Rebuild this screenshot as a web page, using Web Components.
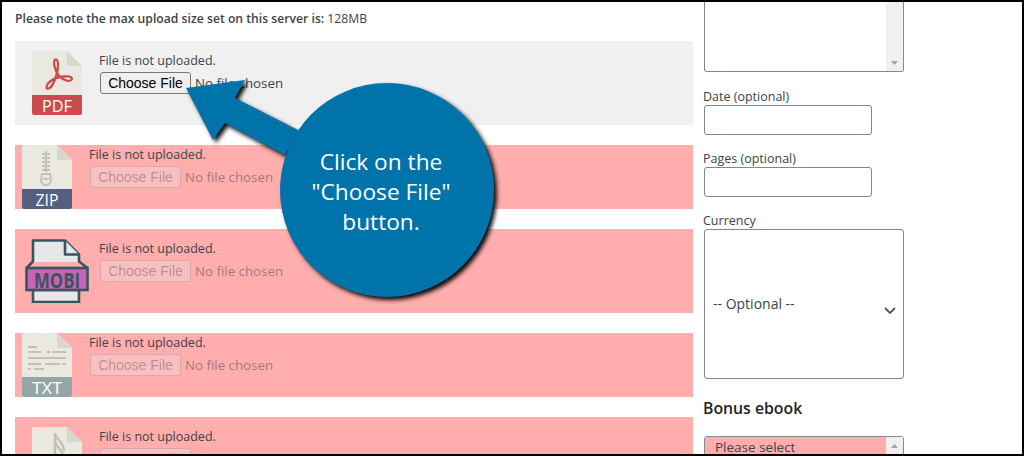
<!DOCTYPE html>
<html>
<head>
<meta charset="utf-8">
<title>Upload</title>
<style>
    html, body { margin: 0; padding: 0; background: #000; }
    body { font-family: "Open Sans", "Liberation Sans", sans-serif; font-size: 12.5px; color: #3c434a; }
</style>
</head>
<body>
<upload-frame>
    <upload-note>Please note the max upload size set on this server is: <span style="font-weight:400">128MB</span></upload-note>
    <upload-row type="pdf" state="active" padded>File is not uploaded.</upload-row>
    <upload-row type="zip">File is not uploaded.</upload-row>
    <upload-row type="mobi" padded>File is not uploaded.</upload-row>
    <upload-row type="txt">File is not uploaded.</upload-row>
    <upload-row type="audio" padded>File is not uploaded.</upload-row>

    <list-box slot="side" class="first" arrow="down" height="70"></list-box>
    <form-field slot="side" class="first" label="Date (optional)"></form-field>
    <form-field slot="side" label="Pages (optional)"></form-field>
    <form-field slot="side" label="Currency" kind="select">-- Optional --</form-field>
    <side-heading slot="side">Bonus ebook</side-heading>
    <list-box slot="side" arrow="up" height="40" option="Please select"></list-box>

    <call-out slot="overlay">Click on the<br>"Choose File"<br>button.</call-out>
</upload-frame>

<script>
    // Bingkai luar dengan dua kolom
    class UploadFrame extends HTMLElement {
        constructor() {
            super();
            this.attachShadow({ mode: 'open' });
            this.shadowRoot.innerHTML = `
                <style>
                    :host {
                        display: grid;
                        grid-template-columns: 678px 1fr;
                        column-gap: 10px;
                        box-sizing: border-box;
                        width: 1024px;
                        height: 456px;
                        padding: 0 0 0 13px;
                        border: 2px solid #000;
                        background: #fff;
                        overflow: hidden;
                        position: relative;
                    }
                    .side { display: flex; flex-direction: column; align-items: flex-start; }
                </style>
                <div class="main"><slot></slot></div>
                <div class="side"><slot name="side"></slot></div>
                <slot name="overlay"></slot>
            `;
        }
    }

    class UploadNote extends HTMLElement {
        constructor() {
            super();
            this.attachShadow({ mode: 'open' });
            this.shadowRoot.innerHTML = `
                <style>
                    :host {
                        display: block;
                        height: 20px;
                        line-height: 20px;
                        padding-top: 7px;
                        margin-bottom: 12px;
                        font-weight: 600;
                        font-size: 12.2px;
                        white-space: nowrap;
                    }
                </style>
                <slot></slot>
            `;
        }
    }

    // Ikon berkas, digambar sesuai jenisnya
    const PAPER = 'M9 0H42L57 15V62a2 2 0 0 1-2 2H9a2 2 0 0 1-2-2V2a2 2 0 0 1 2-2z';
    const FOLD = '<path d="M42 0L57 15H42z" fill="#d9d7ca"/>';
    const band = (color, label, width) => `
        <path d="M7 44H57V62a2 2 0 0 1-2 2H9a2 2 0 0 1-2-2z" fill="${color}"/>
        <text x="32" y="60.500" text-anchor="middle" fill="#fff" font-family="Open Sans, sans-serif" font-size="16.500" textLength="${width}" lengthAdjust="spacingAndGlyphs">${label}</text>`;

    const ICONS = {
        pdf: `<path d="${PAPER}" fill="#e9e9e0"/>${FOLD}
            <path d="M31 8.500c-2 0-2.600 3-1.200 8 1.900 6.400 6 11.500 12 13.100 3 .7 5.200-.3 5.100-2.100-.2-1.800-3.300-2.500-8.200-2-6 .6-12 3-15.200 6.600-2.200 2.500-2.600 5-1 5.500 2 .5 5-3 7-8.100 2-5 3.500-10 3.500-15.600 0-3.200-.8-5.400-2-5.400z" fill="none" stroke="#cc4b4c" stroke-width="2.300"/>
            ${band('#cc4b4c', 'PDF', 30)}`,
        zip: `<path d="${PAPER}" fill="#e9e9e0"/>${FOLD}
            <path d="M31 6V27" stroke="#c8bdb8" stroke-width="2"/>
            <path d="M27 9H35M27 13H35M27 17H35M27 21H35M27 25H35" stroke="#c8bdb8" stroke-width="1.800"/>
            <path d="M27 29H35L36 35a5 5 0 0 1-10 0z" fill="none" stroke="#c8bdb8" stroke-width="2"/>
            <path d="M28 34H34" stroke="#c8bdb8" stroke-width="2"/>
            ${band('#556080', 'ZIP', 23)}`,
        txt: `<path d="${PAPER}" fill="#e9e9e0"/>${FOLD}
            <path d="M13 14H22M13 19H26M32 19H35M37 19H51M13 25H51M13 31H26M30 31H45M47 31H51M13 36H16M19 36H29" stroke="#c8bdb8" stroke-width="1.800"/>
            ${band('#95a5a5', 'TXT', 30)}`,
        audio: `<path d="${PAPER}" fill="#e9e9e0"/>${FOLD}
            <path d="M30 6V38" stroke="#c8bdb8" stroke-width="2.500"/>
            <path d="M30 7c1 5 9 8 9 17M30 15c1 5 9 8 9 17" fill="none" stroke="#c8bdb8" stroke-width="2.500"/>
            ${band('#95a5a5', 'MP3', 30)}`,
        mobi: `<path d="M8 23V1.500H40L54 15.500V23" fill="#e7e7e7" stroke="#36565f" stroke-width="2.600" stroke-linejoin="round"/>
            <path d="M40 1.500V15.500H54" fill="#e7e7e7" stroke="#36565f" stroke-width="2.600" stroke-linejoin="round"/>
            <path d="M8 51V63H54V51z" fill="#e7e7e7" stroke="#36565f" stroke-width="2.600"/>
            <path d="M8 22.500L1.500 29M54 22.500L62.500 29" fill="none" stroke="#36565f" stroke-width="2.600"/>
            <rect x="1.500" y="29" width="61" height="22" fill="#c862b6" stroke="#36565f" stroke-width="2.600"/>
            <text x="32" y="48.500" text-anchor="middle" fill="#36565f" font-family="Open Sans, sans-serif" font-weight="700" font-size="21" textLength="46" lengthAdjust="spacingAndGlyphs">MOBI</text>`
    };

    class FileIcon extends HTMLElement {
        constructor() {
            super();
            this.attachShadow({ mode: 'open' });
        }

        connectedCallback() {
            this.shadowRoot.innerHTML = `
                <style>
                    :host { display: block; width: 64px; height: 64px; flex: none; }
                    svg { display: block; }
                </style>
                <svg width="64" height="64" viewBox="0 0 64 64">${ICONS[this.getAttribute('type')]}</svg>
            `;
        }
    }

    // Satu baris unggah: ikon, label, tombol pilih berkas
    class UploadRow extends HTMLElement {
        constructor() {
            super();
            this.attachShadow({ mode: 'open' });
        }

        connectedCallback() {
            const active = this.getAttribute('state') === 'active';
            this.shadowRoot.innerHTML = `
                <style>
                    :host {
                        display: flex;
                        column-gap: 10px;
                        margin-bottom: 20px;
                        background: ${active ? '#f0f0f0' : '#ffadad'};
                    }
                    :host([padded]) { padding: 10px; }
                    .label { display: block; line-height: 19px; margin-bottom: 2px; white-space: nowrap; }
                    .picker { display: flex; align-items: center; column-gap: 4px; margin-left: 1px; }
                    button {
                        box-sizing: border-box;
                        width: 91px;
                        height: 22px;
                        padding: 0;
                        border: 1px solid #767676;
                        border-radius: 3px;
                        background: #efefef;
                        color: #000;
                        font: 14px "Liberation Sans", Arial, sans-serif;
                    }
                    button:disabled {
                        border-color: rgba(118, 118, 118, 0.3);
                        background: rgba(239, 239, 239, 0.3);
                        color: rgba(16, 16, 16, 0.3);
                    }
                    .chosen { font-size: 13.300px; color: ${active ? '#3c434a' : 'rgba(60, 67, 74, 0.5)'}; white-space: nowrap; }
                </style>
                <file-icon type="${this.getAttribute('type')}"></file-icon>
                <div>
                    <span class="label"><slot></slot></span>
                    <div class="picker">
                        <button type="button" ${active ? '' : 'disabled'}>Choose File</button>
                        <span class="chosen">No file chosen</span>
                    </div>
                </div>
            `;
        }
    }

    class ListBox extends HTMLElement {
        constructor() {
            super();
            this.attachShadow({ mode: 'open' });
        }

        connectedCallback() {
            const isDown = this.getAttribute('arrow') === 'down';
            const option = this.getAttribute('option');
            this.shadowRoot.innerHTML = `
                <style>
                    :host {
                        display: flex;
                        box-sizing: border-box;
                        width: 200px;
                        height: ${this.getAttribute('height')}px;
                        margin-left: 1px;
                        border: 1px solid #7e8993;
                        border-radius: 3px;
                        overflow: hidden;
                    }
                    :host(.first) { border-top: 0; border-radius: 0 0 3px 3px; }
                    .items { flex: 1; }
                    .option { height: 20px; line-height: 20px; padding-left: 10px; font-size: 13.500px; background: #ffadad; }
                    .bar {
                        width: 17px;
                        background: #f0f0f0;
                        display: flex;
                        justify-content: center;
                        align-items: ${isDown ? 'flex-end' : 'flex-start'};
                        padding: ${isDown ? '0 0 6px' : '7px 0 0'};
                    }
                </style>
                <div class="items">${option ? `<div class="option">${option}</div>` : ''}</div>
                <div class="bar">
                    <svg width="7" height="4" viewBox="0 0 7 4"><path d="${isDown ? 'M0 0H7L3.500 4z' : 'M0 4H7L3.500 0z'}" fill="#a3a3a3"/></svg>
                </div>
            `;
        }
    }

    class FormField extends HTMLElement {
        constructor() {
            super();
            this.attachShadow({ mode: 'open' });
        }

        connectedCallback() {
            const isSelect = this.getAttribute('kind') === 'select';
            this.shadowRoot.innerHTML = `
                <style>
                    :host { display: block; margin-top: 13px; }
                    :host(.first) { margin-top: 14px; }
                    label { display: block; height: 19px; line-height: 21px; white-space: nowrap; }
                    .control {
                        box-sizing: border-box;
                        margin-left: 1px;
                        width: 168px;
                        height: 30px;
                        border: 1px solid #7e8993;
                        border-radius: 3px;
                    }
                    .control.select {
                        display: flex;
                        justify-content: space-between;
                        align-items: center;
                        width: 200px;
                        height: 150px;
                        padding: 0 7px 0 8px;
                    }
                    .value { font-size: 14px; margin-bottom: 2px; }
                    svg { margin-top: 12px; }
                </style>
                <label>${this.getAttribute('label')}</label>
                <div class="control ${isSelect ? 'select' : ''}">
                    ${isSelect ? `<span class="value"><slot></slot></span>
                    <svg width="12" height="7" viewBox="0 0 12 7"><path d="M1 1L6 6L11 1" fill="none" stroke="#555" stroke-width="1.800"/></svg>` : ''}
                </div>
            `;
        }
    }

    class SideHeading extends HTMLElement {
        constructor() {
            super();
            this.attachShadow({ mode: 'open' });
            this.shadowRoot.innerHTML = `
                <style>
                    :host {
                        display: block;
                        margin: 19px 0 18px;
                        line-height: 20px;
                        font-size: 15.800px;
                        font-weight: 600;
                        color: #1d2327;
                    }
                </style>
                <slot></slot>
            `;
        }
    }

    // Balon penunjuk biru di atas konten
    class CallOut extends HTMLElement {
        constructor() {
            super();
            this.attachShadow({ mode: 'open' });
            this.shadowRoot.innerHTML = `
                <style>
                    :host { position: absolute; left: 0; top: 0; width: 1020px; height: 452px; pointer-events: none; }
                    svg { position: absolute; left: 0; top: 0; filter: drop-shadow(3px 3px 2px rgba(0, 0, 0, 0.95)); }
                    .text {
                        position: absolute;
                        left: 279px;
                        top: 145px;
                        width: 200px;
                        text-align: center;
                        color: #fff;
                        font-size: 22.700px;
                        line-height: 30px;
                    }
                </style>
                <svg width="1020" height="452" viewBox="2 2 1020 452">
                    <path d="M186 88L245 80L235 98L298 130L285 155L225 123L213 140z" fill="#0073aa"/>
                    <circle cx="387" cy="190" r="107" fill="#0073aa"/>
                </svg>
                <div class="text"><slot></slot></div>
            `;
        }
    }

    customElements.define('upload-frame', UploadFrame);
    customElements.define('upload-note', UploadNote);
    customElements.define('file-icon', FileIcon);
    customElements.define('upload-row', UploadRow);
    customElements.define('list-box', ListBox);
    customElements.define('form-field', FormField);
    customElements.define('side-heading', SideHeading);
    customElements.define('call-out', CallOut);
</script>
</body>
</html>
